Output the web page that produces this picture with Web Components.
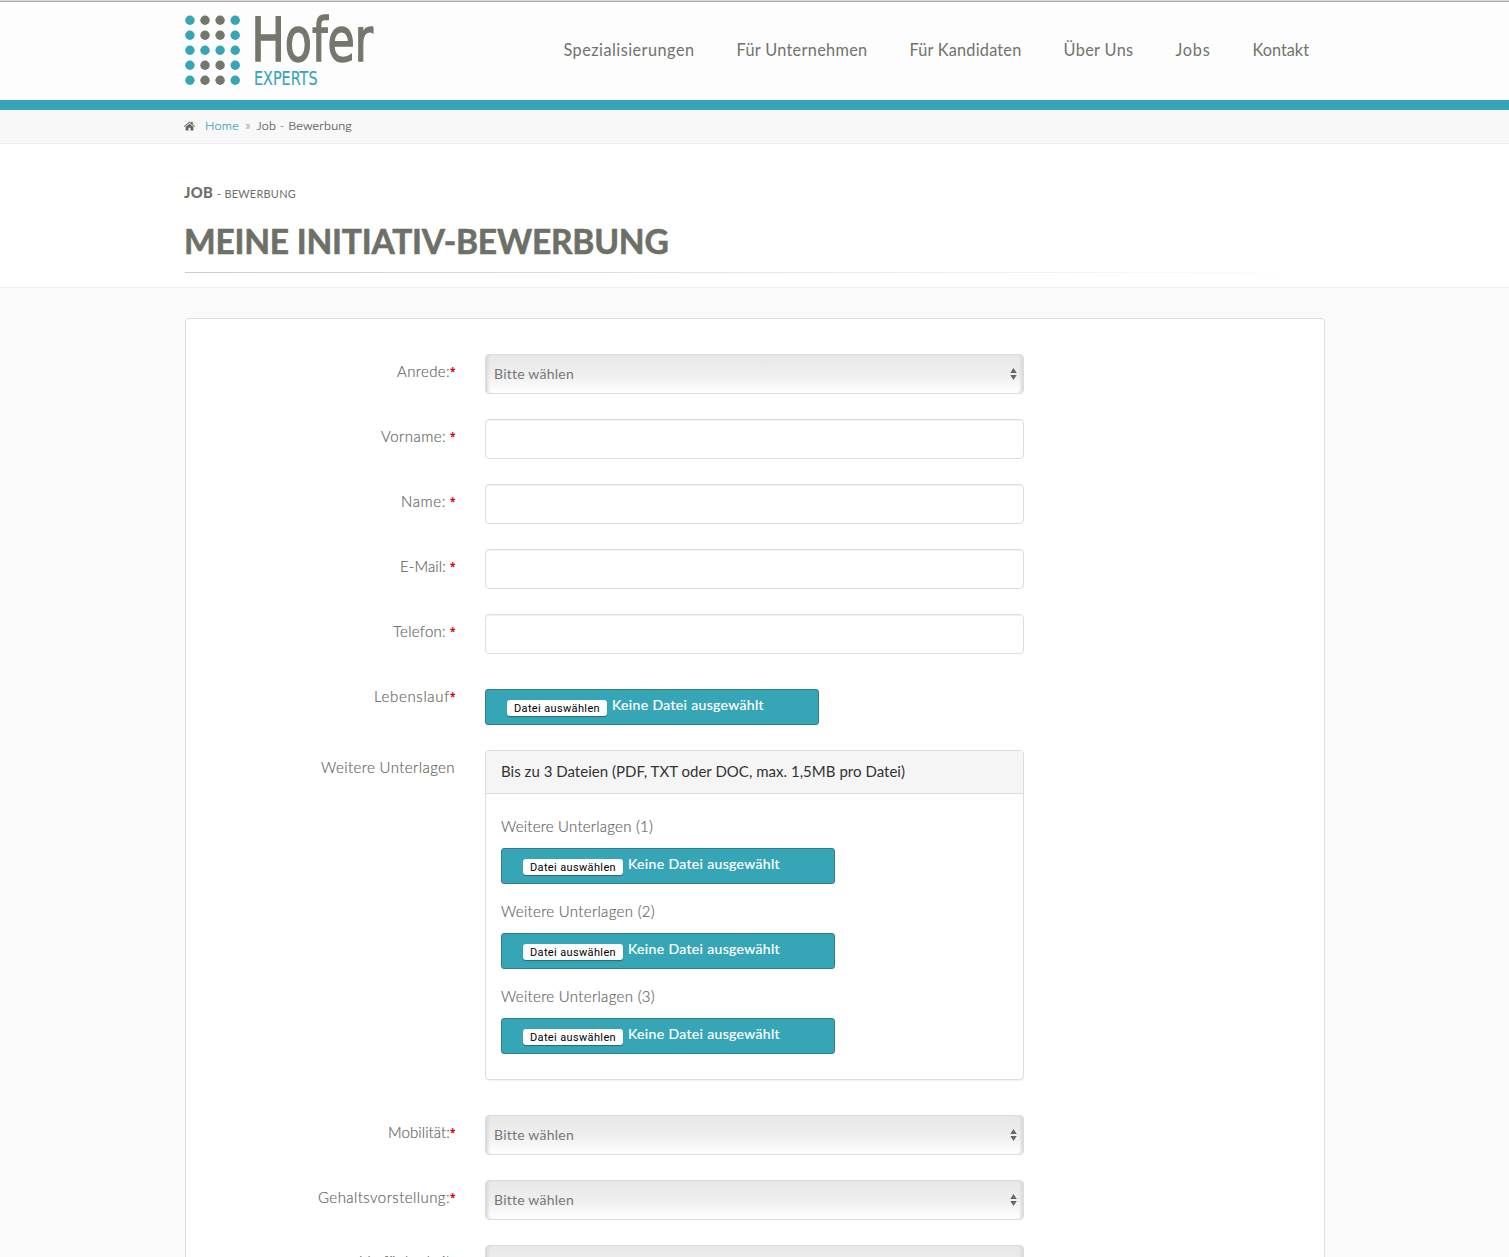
<!DOCTYPE html>
<html lang="de"><head><meta charset="utf-8"><title>Hofer Experts</title>
<style>
html,body{margin:0;height:1257px;overflow:hidden;background:#fafafa}
body{font-family:Lato,"Open Sans",sans-serif;font-size:15px;color:#6b6f68}
</style></head><body><hofer-page></hofer-page>
<script>
// Text run that spreads its letters to the width given in "w".
class FitText extends HTMLElement{
  connectedCallback(){
    const r=this.attachShadow({mode:'open'});
    r.innerHTML='<style>:host{display:inline-block;white-space:nowrap}span{display:inline-block;white-space:pre}</style><span><slot></slot></span>';
    const s=r.querySelector('span'),w=+this.getAttribute('w'),n=this.textContent.length;
    const ls=(w-s.getBoundingClientRect().width)/n;
    s.style.letterSpacing=ls+'px';
  }
}
class HoferLogo extends HTMLElement{
  connectedCallback(){
    let d='';
    for(let y=0;y<5;y++)for(let x=0;x<4;x++){
      const teal=x===0||x===3||y===2;
      d+=`<circle cx="${4.9+x*15.1}" cy="${5.2+y*15}" r="4.7" fill="${teal?'#36a5b6':'#74776d'}"/>`;
    }
    this.attachShadow({mode:'open'}).innerHTML=`<style>:host{display:block;width:192px;height:74px}svg{display:block;overflow:visible}text{font-family:"DejaVu Sans",sans-serif}</style>
    <svg width="192" height="74">${d}
    <text x="66.5" y="45.6" font-size="60" textLength="121.5" lengthAdjust="spacingAndGlyphs" fill="#74776d" stroke="#74776d" stroke-width="1.5">Hofer</text>
    <text x="69" y="69.6" font-size="20" textLength="63.5" lengthAdjust="spacingAndGlyphs" fill="#36a5b6" stroke="#36a5b6" stroke-width=".2">EXPERTS</text></svg>`;
  }
}
class SiteHeader extends HTMLElement{
  connectedCallback(){
    const nav=[['Spezialisierungen',131],['Für Unternehmen',131],['Für Kandidaten',112],['Über Uns',70],['Jobs',35],['Kontakt',56.5]];
    this.attachShadow({mode:'open'}).innerHTML=`<style>:host{display:block;height:110px;box-sizing:border-box;border-top:1px solid #d8d8d8;border-bottom:10px solid #36a5b6;background:#fdfdfd;box-shadow:inset 0 1px #aaa}
    .in{width:1140px;margin:0 auto 0 184.5px;display:flex;justify-content:space-between;padding-top:14px}
    nav{display:flex;gap:42px;padding:24px 15.5px 0 0;font-size:16.3px;line-height:22px;color:#70736c}</style>
    <div class="in"><hofer-logo></hofer-logo><nav>${nav.map(n=>`<fit-text w="${n[1]}">${n[0]}</fit-text>`).join('')}</nav></div>`;
  }
}
class BreadCrumb extends HTMLElement{
  connectedCallback(){
    this.attachShadow({mode:'open'}).innerHTML=`<style>:host{display:flex;align-items:center;height:34px;box-sizing:border-box;border-bottom:1px solid #eee;background:#f8f8f8;padding:0 0 1px 184px;font-size:12.5px;color:#555;font-weight:300;-webkit-text-stroke:.2px}
    svg{margin-right:10px}fit-text{margin-top:-2px}.h{color:#36a5b6}.s{color:#aaa;margin:-3px 5.5px 0 6px;width:6px;font-size:14px}</style>
    <svg width="11" height="10" viewBox="0 0 11 10" fill="#63665f"><path d="M0 5.2 5.5.4l1.7 1.5V.8h1.5v2.4L11 5.2l-.6.7L5.5 1.8.6 5.9zM1.6 6 5.5 2.8 9.4 6v3.6H6.5V6.8h-2v2.8H1.6z"/></svg>
    <fit-text class="h" w="34">Home</fit-text><span class="s">»</span><fit-text w="95.5">Job - Bewerbung</fit-text>`;
  }
}
class PageTitle extends HTMLElement{
  connectedCallback(){
    this.attachShadow({mode:'open'}).innerHTML=`<style>:host{display:block;height:144px;box-sizing:border-box;background:#fff;border-bottom:1px solid #eee;padding:37px 0 0 184px;color:#6c7067}
    .a{height:22px;line-height:22px;display:flex;align-items:baseline;gap:4px}
    b{font-size:14.8px;font-weight:900}small{font-size:10.9px;color:#6b6d69}
    h1{margin:16px 0 0;font-size:33.5px;line-height:44px;font-weight:700;height:53px;-webkit-text-stroke:.6px}
    hr{margin:0 0 0 1px;border:0;height:1px;width:1140px;background:linear-gradient(90deg,#ccc,#fff)}</style>
    <div class="a"><b><fit-text w="29">JOB</fit-text></b><small><fit-text w="79">- BEWERBUNG</fit-text></small></div>
    <h1><fit-text w="484.5">MEINE INITIATIV-BEWERBUNG</fit-text></h1><hr>`;
  }
}
class FormRow extends HTMLElement{
  connectedCallback(){
    const star=this.hasAttribute('req')?'<i>*</i>':'';
    this.attachShadow({mode:'open'}).innerHTML=`<style>:host{display:flex;align-items:flex-start;height:var(--h,65px)}
    .l{width:269px;margin-right:30px;display:flex;justify-content:flex-end;font-size:15px;line-height:20px;padding-top:var(--lt,6.5px);color:#676964;font-weight:300;-webkit-text-stroke:.2px #676964}
    i{color:#d00;font:bold 10px/20px "Open Sans",sans-serif;width:5px;margin-left:${this.hasAttribute('gap')?4:0}px;-webkit-text-stroke:0}</style>
    <div class="l"><fit-text w="${this.getAttribute('lw')}">${this.getAttribute('label')}</fit-text>${star}</div><slot></slot>`;
  }
}
class TextField extends HTMLElement{
  connectedCallback(){
    this.attachShadow({mode:'open'}).innerHTML=`<style>:host{display:block;width:539px;height:40px;box-sizing:border-box;border:1px solid #ddd;border-radius:4px;background:#fff;box-shadow:inset 0 1px 1px rgba(0,0,0,.06)}</style>`;
  }
}
class SelectField extends HTMLElement{
  connectedCallback(){
    this.attachShadow({mode:'open'}).innerHTML=`<style>:host{display:flex;align-items:center;justify-content:space-between;width:539px;height:40px;box-sizing:border-box;border:1px solid #ddd;border-radius:4px;background:linear-gradient(#e8e8e8,#eee 50%,#fff);box-shadow:inset 4px 0 3px -2px #d8d8d8,inset -4px 0 3px -2px #d8d8d8;padding:0 6px 0 8px;font-size:14px;color:#777}
    fit-text{margin-top:-2px}</style>
    <fit-text w="79.5">Bitte wählen</fit-text><svg width="7" height="12" fill="#666"><path d="M.3 5 3.5 0l3.2 5zM.3 7h6.4l-3.2 5z"/></svg>`;
  }
}
class FilePicker extends HTMLElement{
  connectedCallback(){
    this.attachShadow({mode:'open'}).innerHTML=`<style>:host{display:flex;width:334px;height:36px;box-sizing:border-box;border:1px solid #2d7f8c;border-radius:3px;background:#36a5b6;padding:10px 0 0 21px;color:#fff}
    .b{width:100px;height:16px;border-radius:3px;background:#fff;color:#000;box-shadow:0 1px 1px rgba(0,0,0,.35);font:11px/17px Roboto,sans-serif;display:flex;justify-content:center;margin-right:5px}
    .t{font-size:14px;line-height:18px;margin-top:-4px;-webkit-text-stroke:.2px #fff}</style>
    <div class="b"><fit-text w="86">Datei auswählen</fit-text></div><fit-text class="t" w="152">Keine Datei ausgewählt</fit-text>`;
  }
}
class UploadPanel extends HTMLElement{
  connectedCallback(){
    this.attachShadow({mode:'open'}).innerHTML=`<style>:host{display:block;width:539px;height:330px;box-sizing:border-box;border:1px solid #ddd;border-radius:4px;background:#fff;box-shadow:0 1px 1px rgba(0,0,0,.05);overflow:hidden}
    .h{height:42px;line-height:40px;background:#f5f5f5;border-bottom:1px solid #ddd;padding-left:15px;color:#333;font-size:15px}
    .b{padding:22px 15px 0}.g{height:85px}.l{height:32px;line-height:20px;font-size:15px;font-weight:300;color:#676964;-webkit-text-stroke:.2px #676964}</style>
    <div class="h"><fit-text w="404">Bis zu 3 Dateien (PDF, TXT oder DOC, max. 1,5MB pro Datei)</fit-text></div>
    <div class="b">${[152,154,154].map((w,i)=>`<div class="g"><div class="l"><fit-text w="${w}">Weitere Unterlagen (${i+1})</fit-text></div><file-picker></file-picker></div>`).join('')}</div>`;
  }
}
class ApplicationForm extends HTMLElement{
  connectedCallback(){
    this.attachShadow({mode:'open'}).innerHTML=`<style>:host{display:block;margin:30px 0 0 185px;width:1140px;height:1000px;box-sizing:border-box;border:1px solid #ddd;border-radius:4px;background:#fff;padding:35px 0 0}
    .file{--h:71px}.file file-picker{margin-top:10px}.more{--h:365px}.last{--lt:5.5px}</style>
    <form-row label="Anrede:" lw="53" req><select-field></select-field></form-row>
    <form-row label="Vorname:" lw="65" req gap><text-field></text-field></form-row>
    <form-row label="Name:" lw="45" req gap><text-field></text-field></form-row>
    <form-row label="E-Mail:" lw="46" req gap><text-field></text-field></form-row>
    <form-row label="Telefon:" lw="53" req gap><text-field></text-field></form-row>
    <form-row class="file" label="Lebenslauf" lw="76" req><file-picker></file-picker></form-row>
    <form-row class="more" label="Weitere Unterlagen" lw="134"><upload-panel></upload-panel></form-row>
    <form-row label="Mobilität:" lw="62" req><select-field></select-field></form-row>
    <form-row label="Gehaltsvorstellung:" lw="132" req><select-field></select-field></form-row>
    <form-row class="last" label="Verfügbarkeit:" lw="95"><select-field></select-field></form-row>`;
  }
}
class HoferPage extends HTMLElement{
  connectedCallback(){
    this.attachShadow({mode:'open'}).innerHTML=`<style>:host{display:block;height:1257px;overflow:hidden}</style><site-header></site-header><bread-crumb></bread-crumb><page-title></page-title><application-form></application-form>`;
  }
}
Object.entries({'fit-text':FitText,'hofer-logo':HoferLogo,'site-header':SiteHeader,'bread-crumb':BreadCrumb,'page-title':PageTitle,'text-field':TextField,'select-field':SelectField,'file-picker':FilePicker,'upload-panel':UploadPanel,'form-row':FormRow,'application-form':ApplicationForm,'hofer-page':HoferPage}).forEach(([n,c])=>customElements.define(n,c));
</script></body></html>
